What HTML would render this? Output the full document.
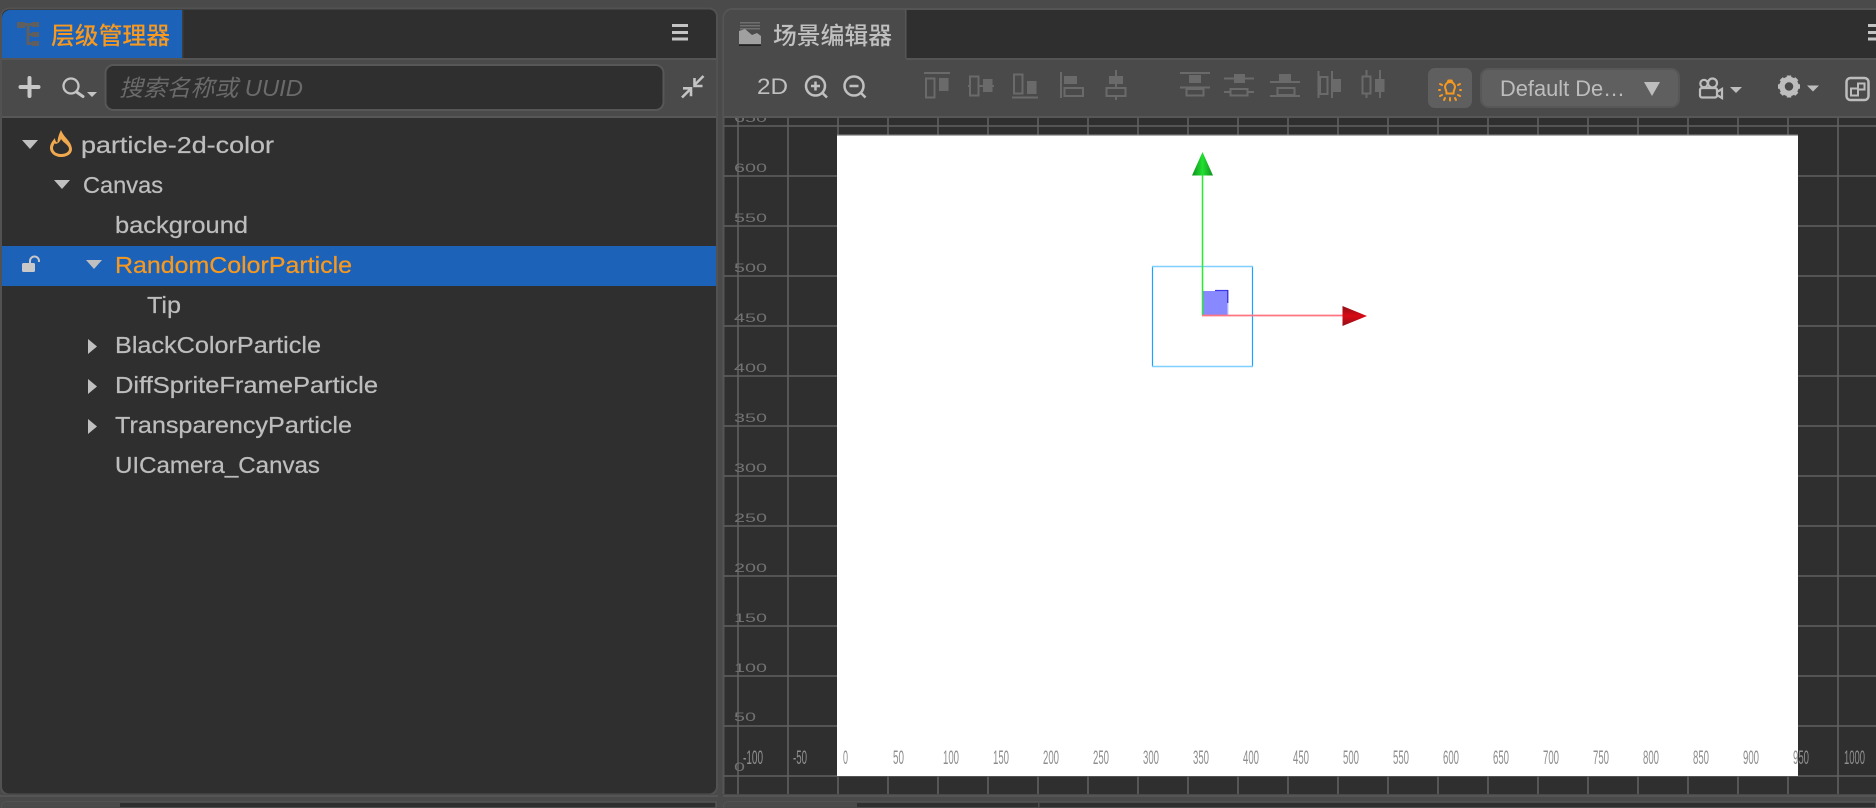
<!DOCTYPE html>
<html lang="zh">
<head>
<meta charset="utf-8">
<title>Scene</title>
<style>
html,body{margin:0;padding:0;width:1876px;height:808px;overflow:hidden;background:#4a4a4a}
svg{display:block}
text{font-family:"Liberation Sans","Noto Sans CJK SC",sans-serif}
.t{font-size:23px;fill:#bdbdbd;stroke:#bdbdbd;stroke-width:.25}
.cjk{font-family:"Noto Sans CJK SC","Liberation Sans",sans-serif;font-size:24px;font-weight:500}
.gl{stroke:#606060;stroke-width:1.6}
.xl{font-size:19px;fill:#8e8e8e}
.yl{font-size:11.5px;fill:#727272}
.al{fill:none;stroke:#6a6a6a;stroke-width:2}
.af{fill:#6a6a6a}
</style>
</head>
<body>
<svg width="1876" height="808" viewBox="0 0 1876 808" xmlns="http://www.w3.org/2000/svg">
<defs>
<clipPath id="gridclip"><rect x="724" y="118" width="1152" height="676"/></clipPath>
<linearGradient id="gg" x1="0" x2="1" y1="0" y2="0"><stop offset="0" stop-color="#0f8f1f"/><stop offset=".5" stop-color="#22e030"/><stop offset="1" stop-color="#0f8f1f"/></linearGradient>
<linearGradient id="rg" x1="0" x2="0" y1="0" y2="1"><stop offset="0" stop-color="#8f0f18"/><stop offset=".5" stop-color="#d80a14"/><stop offset="1" stop-color="#8f0f18"/></linearGradient>
</defs>
<rect width="1876" height="808" fill="#4a4a4a"/>

<!-- left panel -->
<rect x="1" y="8.500" width="716" height="786" rx="8" fill="#2f2f2f" stroke="#525252" stroke-width="2"/>
<path d="M2 58V18a8 8 0 0 1 8-8h172v48z" fill="#1c62b9"/>
<rect x="182" y="10" width="1.500" height="48" fill="#3c3c3c"/>
<rect x="2" y="58" width="714" height="60" fill="#4a4a4a"/>
<rect x="2" y="58" width="714" height="2" fill="#555"/>
<rect x="2" y="116" width="714" height="2" fill="#575757"/>

<!-- tab icon -->
<g fill="#5f5f5f">
<rect x="17" y="22" width="8" height="6"/><rect x="24" y="23" width="9" height="3"/><rect x="32" y="22" width="7" height="5"/>
<rect x="26.500" y="25" width="3" height="20"/><rect x="29" y="33" width="4" height="3"/><rect x="32" y="32" width="7" height="5"/>
<rect x="29" y="42" width="4" height="3"/><rect x="32" y="41" width="7" height="5"/>
</g>
<text class="cjk" x="51" y="44" fill="#f7991f" textLength="119" lengthAdjust="spacingAndGlyphs">层级管理器</text>
<g fill="#c4c4c4"><rect x="672" y="24" width="16" height="3"/><rect x="672" y="31" width="16" height="3"/><rect x="672" y="37.500" width="16" height="3"/></g>

<!-- toolbar left -->
<path d="M29.500 78v18M20.500 87h18" stroke="#c8c8c8" stroke-width="4" stroke-linecap="round" fill="none"/>
<circle cx="71" cy="86" r="7.500" fill="none" stroke="#c4c4c4" stroke-width="2.300"/>
<path d="M76.500 92l6.500 4.500" stroke="#c4c4c4" stroke-width="3" stroke-linecap="round"/>
<path d="M87 92h10l-5 5z" fill="#c4c4c4"/>
<rect x="105.500" y="65" width="558" height="45" rx="8" fill="#2f2f2f" stroke="#575757" stroke-width="2"/>
<text x="119" y="96" font-size="23" font-style="italic" fill="#6a6a6a" textLength="184" lengthAdjust="spacingAndGlyphs">搜索名称或 UUID</text>
<g fill="none" stroke="#c4c4c4" stroke-width="2.600">
<path d="M703.500 76l-8.500 8.500"/><path d="M694.500 78v8h8"/>
<path d="M682 97.500l8.500-8.500"/><path d="M683 88.300h8v8"/>
</g>

<!-- tree -->
<g fill="#c0c0c0">
<path d="M22 140h16l-8 9z"/>
<path d="M54 180h16l-8 9z"/>
</g>
<path d="M61 130C64 138 71.500 141 72 149C72 154 67 157 61 157C55 157 50 153 50 148C50 144 52.500 141 55 138C55 140.500 56 142 57.500 142.500C57.500 138.500 59 134 61 130ZM61 139C59.500 143 56.500 144.500 54.500 143.500C53.500 145.500 53 146.500 53 148C53 151.500 56.500 154 61 154C65.500 154 69 152 69 149C69 145 63.500 143 61 139Z" fill="#f0a94e" fill-rule="evenodd"/>
<text class="t" x="81" y="153" textLength="193" lengthAdjust="spacingAndGlyphs">particle-2d-color</text>
<text class="t" x="83" y="193" textLength="80" lengthAdjust="spacingAndGlyphs">Canvas</text>
<text class="t" x="115" y="233" textLength="133" lengthAdjust="spacingAndGlyphs">background</text>
<rect x="2" y="246" width="714" height="40" fill="#1c62b9"/>
<path d="M86 260h16l-8 9z" fill="#c0c0c0"/>
<rect x="22" y="263" width="13" height="9" rx="1.500" fill="#c8c8c8"/>
<path d="M30 263v-2a4.500 4.500 0 0 1 9 0v1" fill="none" stroke="#c8c8c8" stroke-width="2"/>
<text class="t" x="115" y="273" style="fill:#f7991f;stroke:#f7991f" textLength="237" lengthAdjust="spacingAndGlyphs">RandomColorParticle</text>
<text class="t" x="147" y="313" textLength="34" lengthAdjust="spacingAndGlyphs">Tip</text>
<g fill="#c0c0c0">
<path d="M88 339l9 7.500-9 7.500z"/>
<path d="M88 379l9 7.500-9 7.500z"/>
<path d="M88 419l9 7.500-9 7.500z"/>
</g>
<text class="t" x="115" y="353" textLength="206" lengthAdjust="spacingAndGlyphs">BlackColorParticle</text>
<text class="t" x="115" y="393" textLength="263" lengthAdjust="spacingAndGlyphs">DiffSpriteFrameParticle</text>
<text class="t" x="115" y="433" textLength="237" lengthAdjust="spacingAndGlyphs">TransparencyParticle</text>
<text class="t" x="115" y="473" textLength="205" lengthAdjust="spacingAndGlyphs">UICamera_Canvas</text>

<!-- right panel -->
<path d="M724 794V18a8 8 0 0 1 8-8H1876V794z" fill="#2f2f2f"/>
<path d="M723.500 794V18a9 9 0 0 1 9-9H1876" fill="none" stroke="#555" stroke-width="2"/>
<path d="M724 58V18a8 8 0 0 1 8-8h174v48z" fill="#4a4a4a"/>
<rect x="905" y="10" width="1.500" height="48" fill="#575757"/>
<rect x="724" y="58" width="1152" height="58" fill="#4a4a4a"/>
<rect x="906" y="58" width="970" height="2" fill="#555"/>
<rect x="724" y="116" width="1152" height="2" fill="#575757"/>

<!-- scene tab icon -->
<g fill="#6f6f6f">
<rect x="740" y="22" width="20" height="1.500"/><rect x="740" y="25" width="20" height="1.500"/><rect x="740" y="28" width="20" height="1.500"/>
</g>
<path d="M739 44V31L745 29L752 35L757 33L761 36V44z" fill="#a0a0a0"/>
<rect x="739" y="44.500" width="22" height="1.500" fill="#222"/>
<text class="cjk" x="773" y="44" fill="#c0c0c0" textLength="119" lengthAdjust="spacingAndGlyphs">场景编辑器</text>
<g fill="#c4c4c4"><rect x="1868" y="24" width="8" height="3"/><rect x="1868" y="31" width="8" height="3"/><rect x="1868" y="37.500" width="8" height="3"/></g>

<!-- toolbar right -->
<text x="757" y="94" font-size="22" fill="#c0c0c0" textLength="31" lengthAdjust="spacingAndGlyphs">2D</text>
<g fill="none" stroke="#c0c0c0" stroke-width="2.500">
<circle cx="815.500" cy="86" r="9.500"/><path d="M822.500 93l4.500 4.500M811 86h9M815.500 81.500v9"/>
<circle cx="854" cy="86" r="9.500"/><path d="M861 93l4.500 4.500M849.500 86h9"/>
</g>

<!-- align icons -->
<rect class="al" x="926" y="78.500" width="8.500" height="19"/><rect class="af" x="939" y="78" width="9.500" height="13"/><rect class="af" x="924" y="72" width="26" height="2"/>
<rect class="af" x="968" y="85" width="26" height="2"/><rect x="970" y="76.500" width="8.500" height="19" fill="#4a4a4a" stroke="#6a6a6a" stroke-width="2"/><rect class="af" x="983" y="79" width="9.500" height="13"/>
<rect class="al" x="1014" y="74.500" width="8.500" height="19"/><rect class="af" x="1027" y="81" width="9.500" height="13"/><rect class="af" x="1012" y="96.500" width="26" height="2"/>
<rect class="af" x="1060" y="72" width="2" height="26"/><rect class="af" x="1064" y="76" width="13" height="8"/><rect class="al" x="1064.500" y="88" width="18.500" height="8"/>
<rect class="af" x="1115" y="70" width="2" height="30"/><rect class="af" x="1109" y="76" width="14" height="8"/><rect x="1106.500" y="88" width="19" height="8" fill="#4a4a4a" stroke="#6a6a6a" stroke-width="2"/>
<rect class="af" x="1180" y="72" width="30" height="2"/><rect class="af" x="1189" y="75" width="12" height="8"/><rect class="af" x="1180" y="86.500" width="30" height="2"/><rect class="al" x="1186.500" y="89" width="17" height="6.500"/>
<rect class="af" x="1224" y="77.500" width="30" height="2"/><rect class="af" x="1234" y="74" width="11" height="9"/><rect class="af" x="1224" y="91" width="30" height="2"/><rect x="1230.500" y="89" width="17" height="6.500" fill="#4a4a4a" stroke="#6a6a6a" stroke-width="2"/>
<rect class="af" x="1279" y="74" width="12" height="8"/><rect class="af" x="1270" y="81" width="30" height="2"/><rect class="al" x="1277.500" y="88" width="17" height="7"/><rect class="af" x="1270" y="95" width="30" height="2"/>
<rect class="af" x="1317.500" y="71" width="2" height="27"/><rect class="al" x="1320" y="77" width="7.500" height="17"/><rect class="af" x="1331" y="71" width="2" height="27"/><rect class="af" x="1333" y="79" width="8" height="13"/>
<rect class="af" x="1365.500" y="70" width="2" height="28"/><rect x="1362.500" y="76.500" width="8" height="17" fill="#4a4a4a" stroke="#6a6a6a" stroke-width="2"/><rect class="af" x="1379" y="70" width="2" height="28"/><rect class="af" x="1375" y="79" width="9.500" height="13"/>

<!-- bulb button -->
<rect x="1428" y="68" width="44" height="40" rx="7" fill="#5f5f5f"/>
<g fill="none" stroke="#f7991f" stroke-width="2">
<path d="M1450 82a5 5 0 0 1 4.500 7c-.8 1.500-1 2.500-1 4.500h-7c0-2-.2-3-1-4.500a5 5 0 0 1 4.500-7z"/>
<path d="M1447.500 82l1-1.500h3l1 1.500"/>
<path d="M1440 90h-1M1461 90h-1M1442 85l-2-1M1458 85l2-1M1442 95l-2 1M1458 95l2 1M1445 98l-1 2M1455 98l1 2M1450 98v2.500" stroke-linecap="round"/>
</g>
<!-- dropdown -->
<rect x="1481" y="69" width="198" height="38" rx="8" fill="#5f5f5f" stroke="#575757" stroke-width="2"/>
<text x="1500" y="96" font-size="22" fill="#bdbdbd" textLength="125" lengthAdjust="spacingAndGlyphs">Default De…</text>
<path d="M1644 82h16l-8 14z" fill="#bdbdbd"/>

<!-- camera -->
<g fill="none" stroke="#bdbdbd" stroke-width="2.200">
<circle cx="1704" cy="83.500" r="3.700"/><circle cx="1712.500" cy="83" r="4.500"/>
<rect x="1700" y="88" width="17" height="9.500" rx="2"/>
<path d="M1717 92l5-3v9l-5-3"/>
</g>
<path d="M1730 87h12l-6 6z" fill="#bdbdbd"/>
<!-- gear -->
<circle cx="1789" cy="86.500" r="7" fill="none" stroke="#bdbdbd" stroke-width="5.500"/>
<g stroke="#bdbdbd" stroke-width="4.500">
<path d="M1789 75.500v4M1789 93.500v4M1778 86.500h4M1796 86.500h4M1781.200 78.700l3 3M1793.800 91.300l3 3M1796.800 78.700l-3 3M1784.200 91.300l-3 3"/>
</g>
<path d="M1807 85.500h12l-6 6z" fill="#bdbdbd"/>
<!-- layout -->
<rect x="1846.500" y="78" width="22" height="22" rx="4" fill="none" stroke="#bdbdbd" stroke-width="2.500"/>
<path d="M1851 88.500h7v7h-7zM1858 83.500h6.500v6h-6.500z" fill="none" stroke="#bdbdbd" stroke-width="2"/>

<!-- scene -->
<g clip-path="url(#gridclip)">
<g class="gl">
<path d="M738 118V794M788 118V794M838 118V794M888 118V794M938 118V794M988 118V794M1038 118V794M1088 118V794M1138 118V794M1188 118V794M1238 118V794M1288 118V794M1338 118V794M1388 118V794M1438 118V794M1488 118V794M1538 118V794M1588 118V794M1638 118V794M1688 118V794M1738 118V794M1788 118V794M1838 118V794M1888 118V794"/>
<path d="M724 126H1876M724 176H1876M724 226H1876M724 276H1876M724 326H1876M724 376H1876M724 426H1876M724 476H1876M724 526H1876M724 576H1876M724 626H1876M724 676H1876M724 726H1876M724 776H1876"/>
</g>
<rect x="837" y="135" width="961" height="641" fill="#fff"/>
<rect x="837" y="134.500" width="961" height="1.200" fill="#8a8a8a"/>
<g class="yl">
<text x="734" y="122" textLength="33" lengthAdjust="spacingAndGlyphs">650</text>
<text x="734" y="172" textLength="33" lengthAdjust="spacingAndGlyphs">600</text>
<text x="734" y="222" textLength="33" lengthAdjust="spacingAndGlyphs">550</text>
<text x="734" y="272" textLength="33" lengthAdjust="spacingAndGlyphs">500</text>
<text x="734" y="322" textLength="33" lengthAdjust="spacingAndGlyphs">450</text>
<text x="734" y="372" textLength="33" lengthAdjust="spacingAndGlyphs">400</text>
<text x="734" y="422" textLength="33" lengthAdjust="spacingAndGlyphs">350</text>
<text x="734" y="472" textLength="33" lengthAdjust="spacingAndGlyphs">300</text>
<text x="734" y="522" textLength="33" lengthAdjust="spacingAndGlyphs">250</text>
<text x="734" y="572" textLength="33" lengthAdjust="spacingAndGlyphs">200</text>
<text x="734" y="622" textLength="33" lengthAdjust="spacingAndGlyphs">150</text>
<text x="734" y="672" textLength="33" lengthAdjust="spacingAndGlyphs">100</text>
<text x="734" y="721" textLength="22" lengthAdjust="spacingAndGlyphs">50</text>
<text x="734" y="771" textLength="11" lengthAdjust="spacingAndGlyphs">0</text>
</g>
<g class="xl">
<text x="743" y="764" textLength="20" lengthAdjust="spacingAndGlyphs">-100</text>
<text x="793" y="764" textLength="14" lengthAdjust="spacingAndGlyphs">-50</text>
<text x="843" y="764" textLength="5" lengthAdjust="spacingAndGlyphs">0</text>
<text x="893" y="764" textLength="11" lengthAdjust="spacingAndGlyphs">50</text>
<text x="943" y="764" textLength="16" lengthAdjust="spacingAndGlyphs">100</text>
<text x="993" y="764" textLength="16" lengthAdjust="spacingAndGlyphs">150</text>
<text x="1043" y="764" textLength="16" lengthAdjust="spacingAndGlyphs">200</text>
<text x="1093" y="764" textLength="16" lengthAdjust="spacingAndGlyphs">250</text>
<text x="1143" y="764" textLength="16" lengthAdjust="spacingAndGlyphs">300</text>
<text x="1193" y="764" textLength="16" lengthAdjust="spacingAndGlyphs">350</text>
<text x="1243" y="764" textLength="16" lengthAdjust="spacingAndGlyphs">400</text>
<text x="1293" y="764" textLength="16" lengthAdjust="spacingAndGlyphs">450</text>
<text x="1343" y="764" textLength="16" lengthAdjust="spacingAndGlyphs">500</text>
<text x="1393" y="764" textLength="16" lengthAdjust="spacingAndGlyphs">550</text>
<text x="1443" y="764" textLength="16" lengthAdjust="spacingAndGlyphs">600</text>
<text x="1493" y="764" textLength="16" lengthAdjust="spacingAndGlyphs">650</text>
<text x="1543" y="764" textLength="16" lengthAdjust="spacingAndGlyphs">700</text>
<text x="1593" y="764" textLength="16" lengthAdjust="spacingAndGlyphs">750</text>
<text x="1643" y="764" textLength="16" lengthAdjust="spacingAndGlyphs">800</text>
<text x="1693" y="764" textLength="16" lengthAdjust="spacingAndGlyphs">850</text>
<text x="1743" y="764" textLength="16" lengthAdjust="spacingAndGlyphs">900</text>
<text x="1793" y="764" textLength="16" lengthAdjust="spacingAndGlyphs">950</text>
<text x="1844" y="764" textLength="21" lengthAdjust="spacingAndGlyphs">1000</text>
</g>

<!-- gizmo -->
<path d="M1152.500 266.500v100M1252.500 266.500v100" stroke="#1ea0ff" stroke-width="1.200"/>
<path d="M1152 266.500h101M1152 366.500h101" stroke="#7fcfff" stroke-width="1.600"/>
<rect x="1203" y="291" width="24.500" height="24.500" fill="#8888ff"/>
<path d="M1215 290.500h13" stroke="#3a3ae8" stroke-width="1.200"/>
<path d="M1227.800 290v13" stroke="#2a2ae0" stroke-width="1.200"/>
<path d="M1227.800 303v12" stroke="#bcbcff" stroke-width="1.200"/>
<path d="M1202.500 175V315.500" stroke="#22f02c" stroke-width="1.500"/>
<path d="M1202.500 152L1213 175.500H1192z" fill="url(#gg)"/>
<path d="M1202 315.500H1343" stroke="#ff7580" stroke-width="1.800"/>
<path d="M1342.500 306L1367 316L1342.500 326z" fill="url(#rg)"/>
</g>

<!-- bottom band -->
<rect x="0" y="794" width="1876" height="14" fill="#4a4a4a"/>
<rect x="0" y="795" width="718" height="2" fill="#555"/>
<rect x="723" y="795" width="1153" height="2" fill="#555"/>
<path d="M2 808v-2a4 4 0 0 1 4-4h710v6z" fill="#2f2f2f" stroke="#555" stroke-width="1.500"/>
<path d="M2 808v-2a4 4 0 0 1 4-4h114v6z" fill="#4a4a4a"/>
<path d="M724 808v-2a4 4 0 0 1 4-4h1148v6z" fill="#2f2f2f" stroke="#555" stroke-width="1.500"/>
<path d="M724 808v-2a4 4 0 0 1 4-4h129v6z" fill="#4a4a4a"/>
<rect x="1038" y="802" width="1.500" height="6" fill="#4d4d4d"/>
</svg>
</body>
</html>
